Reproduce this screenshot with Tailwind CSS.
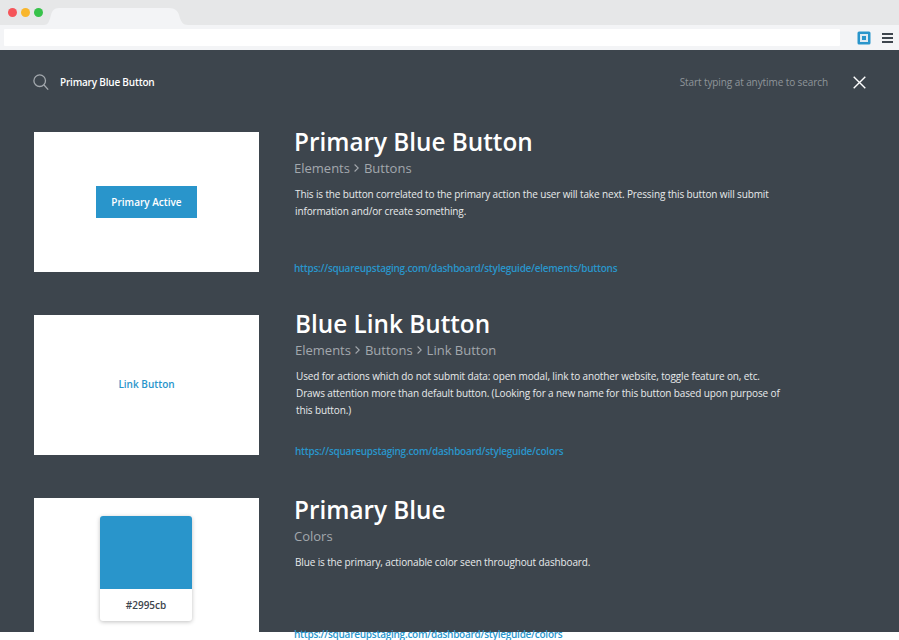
<!DOCTYPE html>
<html lang="en">
<head>
  <meta charset="UTF-8" />
  <title>Styleguide search</title>
  <script src="https://cdn.jsdelivr.net/npm/@tailwindcss/browser@4"></script>
</head>
<body class="bg-white h-[640px] overflow-hidden font-['Open_Sans',sans-serif]">
  <!-- Browser chrome -->
  <div class="h-[25px] bg-[#e6e7e8] flex items-start relative">
    <div class="flex gap-[4px] pl-[8px] pt-[8px]">
      <span class="w-[9px] h-[9px] rounded-full bg-[#f5555a]"></span>
      <span class="w-[9px] h-[9px] rounded-full bg-[#f8b62d]"></span>
      <span class="w-[9px] h-[9px] rounded-full bg-[#37c24a]"></span>
    </div>
    <svg class="absolute left-[44px] top-[8px]" width="144" height="17" viewBox="0 0 144 17">
      <path d="M0 17C4 17 5 14 7 7C8 3 10 0 15 0H125C131 0 134 3 135 7C137 14 139 17 144 17Z" fill="#f3f4f6"/>
    </svg>
  </div>
  <div class="h-[25px] bg-[#f3f4f6] flex items-center pl-[4px]">
    <div class="w-[836px] h-[17px] bg-white rounded-[1px]"></div>
    <svg class="ml-[17px]" width="14" height="14" viewBox="0 0 14 14">
      <rect x="0.5" y="0.5" width="13" height="13" rx="1.5" fill="#2995cb"/>
      <rect x="3" y="3" width="8" height="8" fill="#dfeaf2"/>
      <rect x="5" y="5" width="4" height="4" fill="#2995cb"/>
    </svg>
    <div class="ml-[11px] flex flex-col gap-[2px]">
      <span class="w-[11px] h-[2px] bg-[#3d454d]"></span>
      <span class="w-[11px] h-[2px] bg-[#3d454d]"></span>
      <span class="w-[11px] h-[2px] bg-[#3d454d]"></span>
    </div>
  </div>

  <!-- Search overlay -->
  <div class="h-[582px] bg-[#3d454d] px-[34px]">
    <div class="h-[64px] mb-[18px] flex items-center">
      <svg class="-ml-px" width="16" height="17" viewBox="0 0 16 17" fill="none" stroke="#a3a8ad" stroke-width="1.3">
        <circle cx="6.7" cy="6.7" r="5.8"/>
        <path d="M11 11L15.2 15.6"/>
      </svg>
      <span class="ml-[11px] text-[10px] tracking-[-0.2px] font-semibold text-white">Primary Blue Button</span>
      <span class="ml-auto text-[10px] tracking-[-0.09px] text-[#8f959a]">Start typing at anytime to search</span>
      <svg class="ml-[25px] mr-[-1px]" width="13" height="13" viewBox="0 0 13 13" stroke="#fff" stroke-width="1.4">
        <path d="M0.7 0.7L12.3 12.3M12.3 0.7L0.7 12.3"/>
      </svg>
    </div>

    <div class="flex flex-col gap-[43px]">
      <div class="h-[140px] flex">
        <div class="w-[225px] h-[140px] bg-white flex items-center justify-center">
          <span class="w-[101px] h-[32px] bg-[#2995cb] flex items-center justify-center text-white text-[10px] font-semibold">Primary Active</span>
        </div>
        <div class="ml-[35px] w-[490px]">
          <h2 class="text-[24.3px] leading-[20px] font-semibold text-white">Primary Blue Button</h2>
          <div class="mt-[6px] flex items-center gap-[4.5px] text-[13px] leading-[20px] text-[#a3a8ad]">
            <span>Elements</span>
            <svg width="5" height="8" viewBox="0 0 5 8" fill="none" stroke="#a3a8ad" stroke-width="1.1"><path d="M0.6 0.5L4.2 4L0.6 7.5"/></svg>
            <span>Buttons</span>
          </div>
          <p class="mt-[8px] pl-px text-[10px] tracking-[-0.13px] leading-[17px] text-[#e8eaeb]">This is the button correlated to the primary action the user will take next. Pressing this button will submit information and/or create something.</p>
          <a class="block mt-[41px] text-[10px] tracking-[-0.25px] leading-[14px] font-semibold text-[#2995cb]">https://squareupstaging.com/dashboard/styleguide/elements/buttons</a>
        </div>
      </div>

      <div class="h-[140px] flex">
        <div class="w-[225px] h-[140px] bg-white flex items-center justify-center pb-px">
          <span class="text-[#2995cb] text-[10px] font-semibold">Link Button</span>
        </div>
        <div class="ml-[36px] w-[490px] -mt-px">
          <h2 class="text-[24.3px] leading-[20px] font-semibold text-white">Blue Link Button</h2>
          <div class="mt-[6px] flex items-center gap-[4.5px] text-[13px] leading-[20px] text-[#a3a8ad]">
            <span>Elements</span>
            <svg width="5" height="8" viewBox="0 0 5 8" fill="none" stroke="#a3a8ad" stroke-width="1.1"><path d="M0.6 0.5L4.2 4L0.6 7.5"/></svg>
            <span>Buttons</span>
            <svg width="5" height="8" viewBox="0 0 5 8" fill="none" stroke="#a3a8ad" stroke-width="1.1"><path d="M0.6 0.5L4.2 4L0.6 7.5"/></svg>
            <span>Link Button</span>
          </div>
          <p class="mt-[8px] pl-px text-[10px] tracking-[-0.13px] leading-[17px] text-[#e8eaeb]">Used for actions which do not submit data: open modal, link to another website, toggle feature on, etc. Draws attention more than default button. (Looking for a new name for this button based upon purpose of this button.)</p>
          <a class="block mt-[25px] text-[10px] tracking-[-0.25px] leading-[14px] font-semibold text-[#2995cb]">https://squareupstaging.com/dashboard/styleguide/colors</a>
        </div>
      </div>

      <div class="h-[142px] flex">
        <div class="w-[225px] h-[142px] bg-white flex justify-center pt-[18px] pr-px">
          <div class="w-[92px] h-[105px] bg-white rounded-[3px] shadow-[0_1px_4px_rgba(0,0,0,0.25)] overflow-hidden">
            <div class="h-[73px] bg-[#2995cb]"></div>
            <div class="h-[32px] flex items-center justify-center text-[10px] font-semibold text-[#3d454d]">#2995cb</div>
          </div>
        </div>
        <div class="ml-[35px] w-[490px] mt-[2px]">
          <h2 class="text-[24.3px] leading-[20px] font-semibold text-white">Primary Blue</h2>
          <div class="mt-[6px] text-[13px] leading-[20px] text-[#a3a8ad]">Colors</div>
          <p class="mt-[8px] pl-px text-[10px] tracking-[-0.13px] leading-[17px] text-[#e8eaeb]">Blue is the primary, actionable color seen throughout dashboard.</p>
          <a class="block mt-[56px] text-[10px] tracking-[-0.25px] leading-[14px] font-semibold text-[#2995cb]">https://squareupstaging.com/dashboard/styleguide/colors</a>
        </div>
      </div>
    </div>
  </div>
</body>
</html>
